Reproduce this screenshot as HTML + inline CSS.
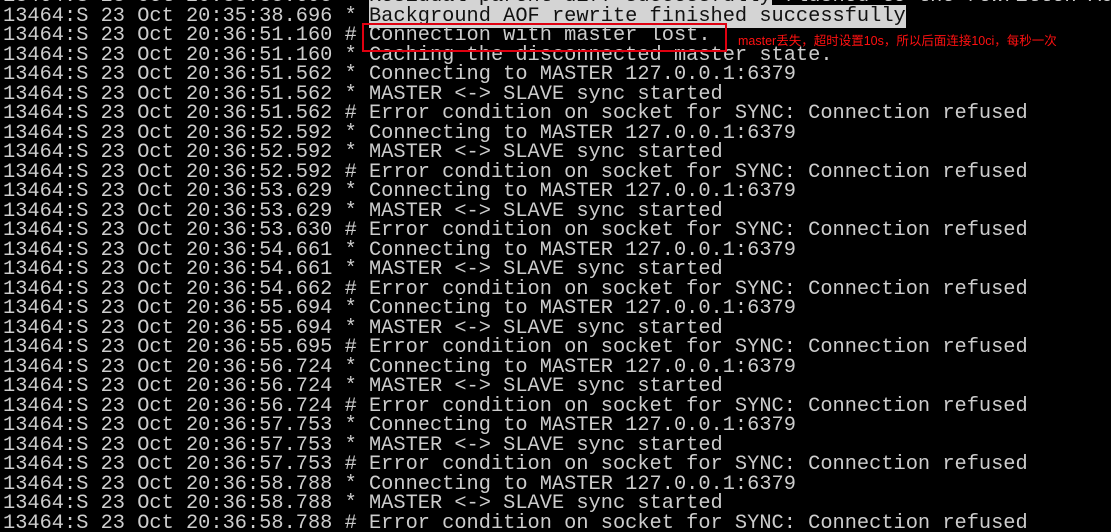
<!DOCTYPE html>
<html><head><meta charset="utf-8"><style>
html,body{margin:0;padding:0;background:#000;width:1111px;height:532px;overflow:hidden;position:relative}
#t{position:absolute;left:3px;top:-13px;font-family:"Liberation Mono",monospace;font-size:20.33px;line-height:19.5px;color:#cdcdcd;white-space:pre}
.hl{background:#d4d4d4;color:#111}
#box{position:absolute;left:362px;top:23px;width:361px;height:25px;border:2.5px solid #e00010}
#note{position:absolute;left:738px;top:30px;font-family:"Liberation Sans","Noto Sans CJK SC",sans-serif;font-size:12.5px;color:#ff1010;white-space:nowrap}
</style></head><body>
<div id="t">13464:S 23 Oct 20:35:38.695 * <span class="hl">Residual parent diff successfully</span> flushed to the rewritten AOF
13464:S 23 Oct 20:35:38.696 * <span class="hl">Background AOF rewrite finished successfully</span>
13464:S 23 Oct 20:36:51.160 # Connection with master lost.
13464:S 23 Oct 20:36:51.160 * Caching the disconnected master state.
13464:S 23 Oct 20:36:51.562 * Connecting to MASTER 127.0.0.1:6379
13464:S 23 Oct 20:36:51.562 * MASTER &lt;-&gt; SLAVE sync started
13464:S 23 Oct 20:36:51.562 # Error condition on socket for SYNC: Connection refused
13464:S 23 Oct 20:36:52.592 * Connecting to MASTER 127.0.0.1:6379
13464:S 23 Oct 20:36:52.592 * MASTER &lt;-&gt; SLAVE sync started
13464:S 23 Oct 20:36:52.592 # Error condition on socket for SYNC: Connection refused
13464:S 23 Oct 20:36:53.629 * Connecting to MASTER 127.0.0.1:6379
13464:S 23 Oct 20:36:53.629 * MASTER &lt;-&gt; SLAVE sync started
13464:S 23 Oct 20:36:53.630 # Error condition on socket for SYNC: Connection refused
13464:S 23 Oct 20:36:54.661 * Connecting to MASTER 127.0.0.1:6379
13464:S 23 Oct 20:36:54.661 * MASTER &lt;-&gt; SLAVE sync started
13464:S 23 Oct 20:36:54.662 # Error condition on socket for SYNC: Connection refused
13464:S 23 Oct 20:36:55.694 * Connecting to MASTER 127.0.0.1:6379
13464:S 23 Oct 20:36:55.694 * MASTER &lt;-&gt; SLAVE sync started
13464:S 23 Oct 20:36:55.695 # Error condition on socket for SYNC: Connection refused
13464:S 23 Oct 20:36:56.724 * Connecting to MASTER 127.0.0.1:6379
13464:S 23 Oct 20:36:56.724 * MASTER &lt;-&gt; SLAVE sync started
13464:S 23 Oct 20:36:56.724 # Error condition on socket for SYNC: Connection refused
13464:S 23 Oct 20:36:57.753 * Connecting to MASTER 127.0.0.1:6379
13464:S 23 Oct 20:36:57.753 * MASTER &lt;-&gt; SLAVE sync started
13464:S 23 Oct 20:36:57.753 # Error condition on socket for SYNC: Connection refused
13464:S 23 Oct 20:36:58.788 * Connecting to MASTER 127.0.0.1:6379
13464:S 23 Oct 20:36:58.788 * MASTER &lt;-&gt; SLAVE sync started
13464:S 23 Oct 20:36:58.788 # Error condition on socket for SYNC: Connection refused</div>
<div id="box"></div>
<div id="note">master丢失，超时设置10s，所以后面连接10ci，每秒一次</div>
</body></html>
